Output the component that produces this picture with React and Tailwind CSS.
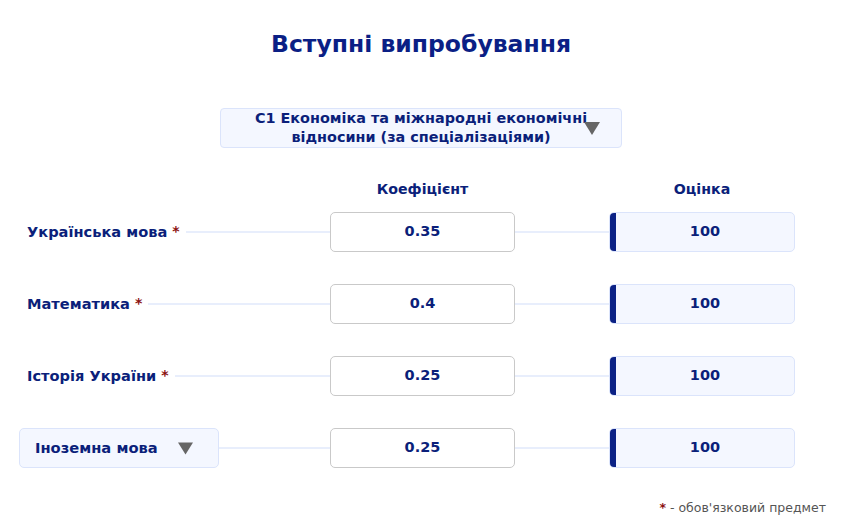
import React, { useState } from 'react';

const SUBJECTS = [
  { name: 'Українська мова', coef: '0.35', score: '100' },
  { name: 'Математика', coef: '0.4', score: '100' },
  { name: 'Історія України', coef: '0.25', score: '100' },
];

function Arrow({ className }) {
  return (
    <svg viewBox="0 0 16 13" className={className}>
      <path d="M0 0 H16 L8 13 Z" fill="#666666" />
    </svg>
  );
}

function Line() {
  return <div className="h-[2px] flex-1 bg-[#e8eefc]" />;
}

function ValueBoxes({ coef, score }) {
  return (
    <>
      <div className="flex h-[40px] w-[185px] shrink-0 items-center justify-center rounded-[5px] border border-[#c9c9c9] bg-white text-[14.5px] font-bold text-[#0b1f7a]">
        {coef}
      </div>
      <div className="flex w-[94px] shrink-0">
        <Line />
      </div>
      <div className="flex h-[40px] w-[186px] shrink-0 overflow-hidden rounded-[5px] border border-[#dbe4fb] bg-[#f4f7ff]">
        <div className="w-[6px] bg-[#0b2185]" />
        <div className="flex flex-1 items-center justify-center text-[14.5px] font-bold text-[#0b1f7a]">
          {score}
        </div>
      </div>
    </>
  );
}

export default function App() {
  const [spec] = useState('С1 Економіка та міжнародні економічні відносини (за спеціалізаціями)');

  return (
    <div className="min-h-[526px] w-[842px] bg-white text-[#0b1f7a] [font-family:'DejaVu_Sans',sans-serif]">
      <h1 className="pt-[30px] text-center text-[23.5px] font-bold leading-[28px] text-[#0b1f85]">
        Вступні випробування
      </h1>

      {/* specialty picker */}
      <div className="mt-[50px] flex justify-center">
        <div className="relative flex h-[40px] w-[402px] items-center justify-center rounded-[4px] border border-[#dbe4fb] bg-[#f4f7ff] text-center text-[14.4px] font-bold leading-[19px]">
          <span className="w-[350px]">{spec}</span>
          <Arrow className="absolute right-[21px] top-[13px] h-[13px] w-[16px]" />
        </div>
      </div>

      <div className="ml-[19px] mt-[31px] w-[776px]">
        {/* column headers */}
        <div className="flex h-[22px] items-center text-[14.2px] font-bold">
          <div className="w-[311px]" />
          <div className="w-[185px] text-center">Коефіцієнт</div>
          <div className="w-[94px]" />
          <div className="w-[186px] text-center">Оцінка</div>
        </div>

        <div className="mt-[11px] flex flex-col gap-[32px]">
          {SUBJECTS.map((s) => (
            <div key={s.name} className="flex items-center">
              <div className="flex w-[311px] shrink-0 items-center pl-[8px]">
                <span className="text-[14.6px] font-bold">{s.name}</span>
                <span className="ml-[5px] mr-[6px] text-[14px] font-bold text-[#8b1010]">*</span>
                <Line />
              </div>
              <ValueBoxes coef={s.coef} score={s.score} />
            </div>
          ))}

          <div className="flex items-center">
            <div className="flex w-[311px] shrink-0 items-center">
              <div className="flex h-[40px] w-[200px] items-center rounded-[5px] border border-[#dbe4fb] bg-[#f4f7ff] pl-[15px] pr-[25px]">
                <span className="flex-1 text-[14.7px] font-bold">Іноземна мова</span>
                <Arrow className="h-[13px] w-[15px]" />
              </div>
              <Line />
            </div>
            <ValueBoxes coef="0.25" score="100" />
          </div>
        </div>
      </div>

      <div className="mr-[16px] mt-[31px] text-right text-[12.5px] text-[#555555]">
        <span className="font-bold text-[#8b1010]">*</span> - обов'язковий предмет
      </div>
    </div>
  );
}
